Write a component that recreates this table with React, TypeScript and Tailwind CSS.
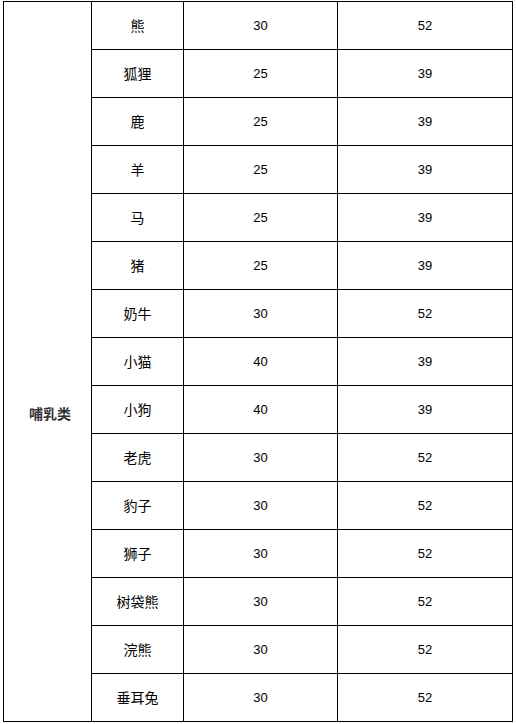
import React from "react";

const rows: [string, string, string][] = [
  ["熊", "30", "52"],
  ["狐狸", "25", "39"],
  ["鹿", "25", "39"],
  ["羊", "25", "39"],
  ["马", "25", "39"],
  ["猪", "25", "39"],
  ["奶牛", "30", "52"],
  ["小猫", "40", "39"],
  ["小狗", "40", "39"],
  ["老虎", "30", "52"],
  ["豹子", "30", "52"],
  ["狮子", "30", "52"],
  ["树袋熊", "30", "52"],
  ["浣熊", "30", "52"],
  ["垂耳兔", "30", "52"],
];

const cjk = "font-['Noto_Sans_CJK_SC','Noto_Sans',sans-serif]";
const num = "font-['Liberation_Sans',Arial,sans-serif]";

export default function App() {
  return (
    <div className="w-[516px] h-[724px] bg-white pt-[1px] pl-[3px] text-black">
      <div className="flex w-[510px] border-l border-t border-black">
        <div className="w-[88px] shrink-0 border-r border-b border-black">
          <div
            className={`pt-[403px] pl-[5px] text-center text-[14px] leading-[16px] font-semibold text-[#333] ${cjk}`}
          >
            哺乳类
          </div>
        </div>
        <div className="flex flex-col">
          {rows.map(([name, a, b], i) => (
            <div key={i} className="flex h-[48px]">
              <div
                className={`w-[92px] flex items-center justify-center border-r border-b border-black text-[14px] ${cjk}`}
              >
                {name}
              </div>
              <div
                className={`w-[154px] flex items-center justify-center border-r border-b border-black text-[13px] ${num}`}
              >
                {a}
              </div>
              <div
                className={`w-[175px] flex items-center justify-center border-r border-b border-black text-[13px] ${num}`}
              >
                {b}
              </div>
            </div>
          ))}
        </div>
      </div>
    </div>
  );
}
